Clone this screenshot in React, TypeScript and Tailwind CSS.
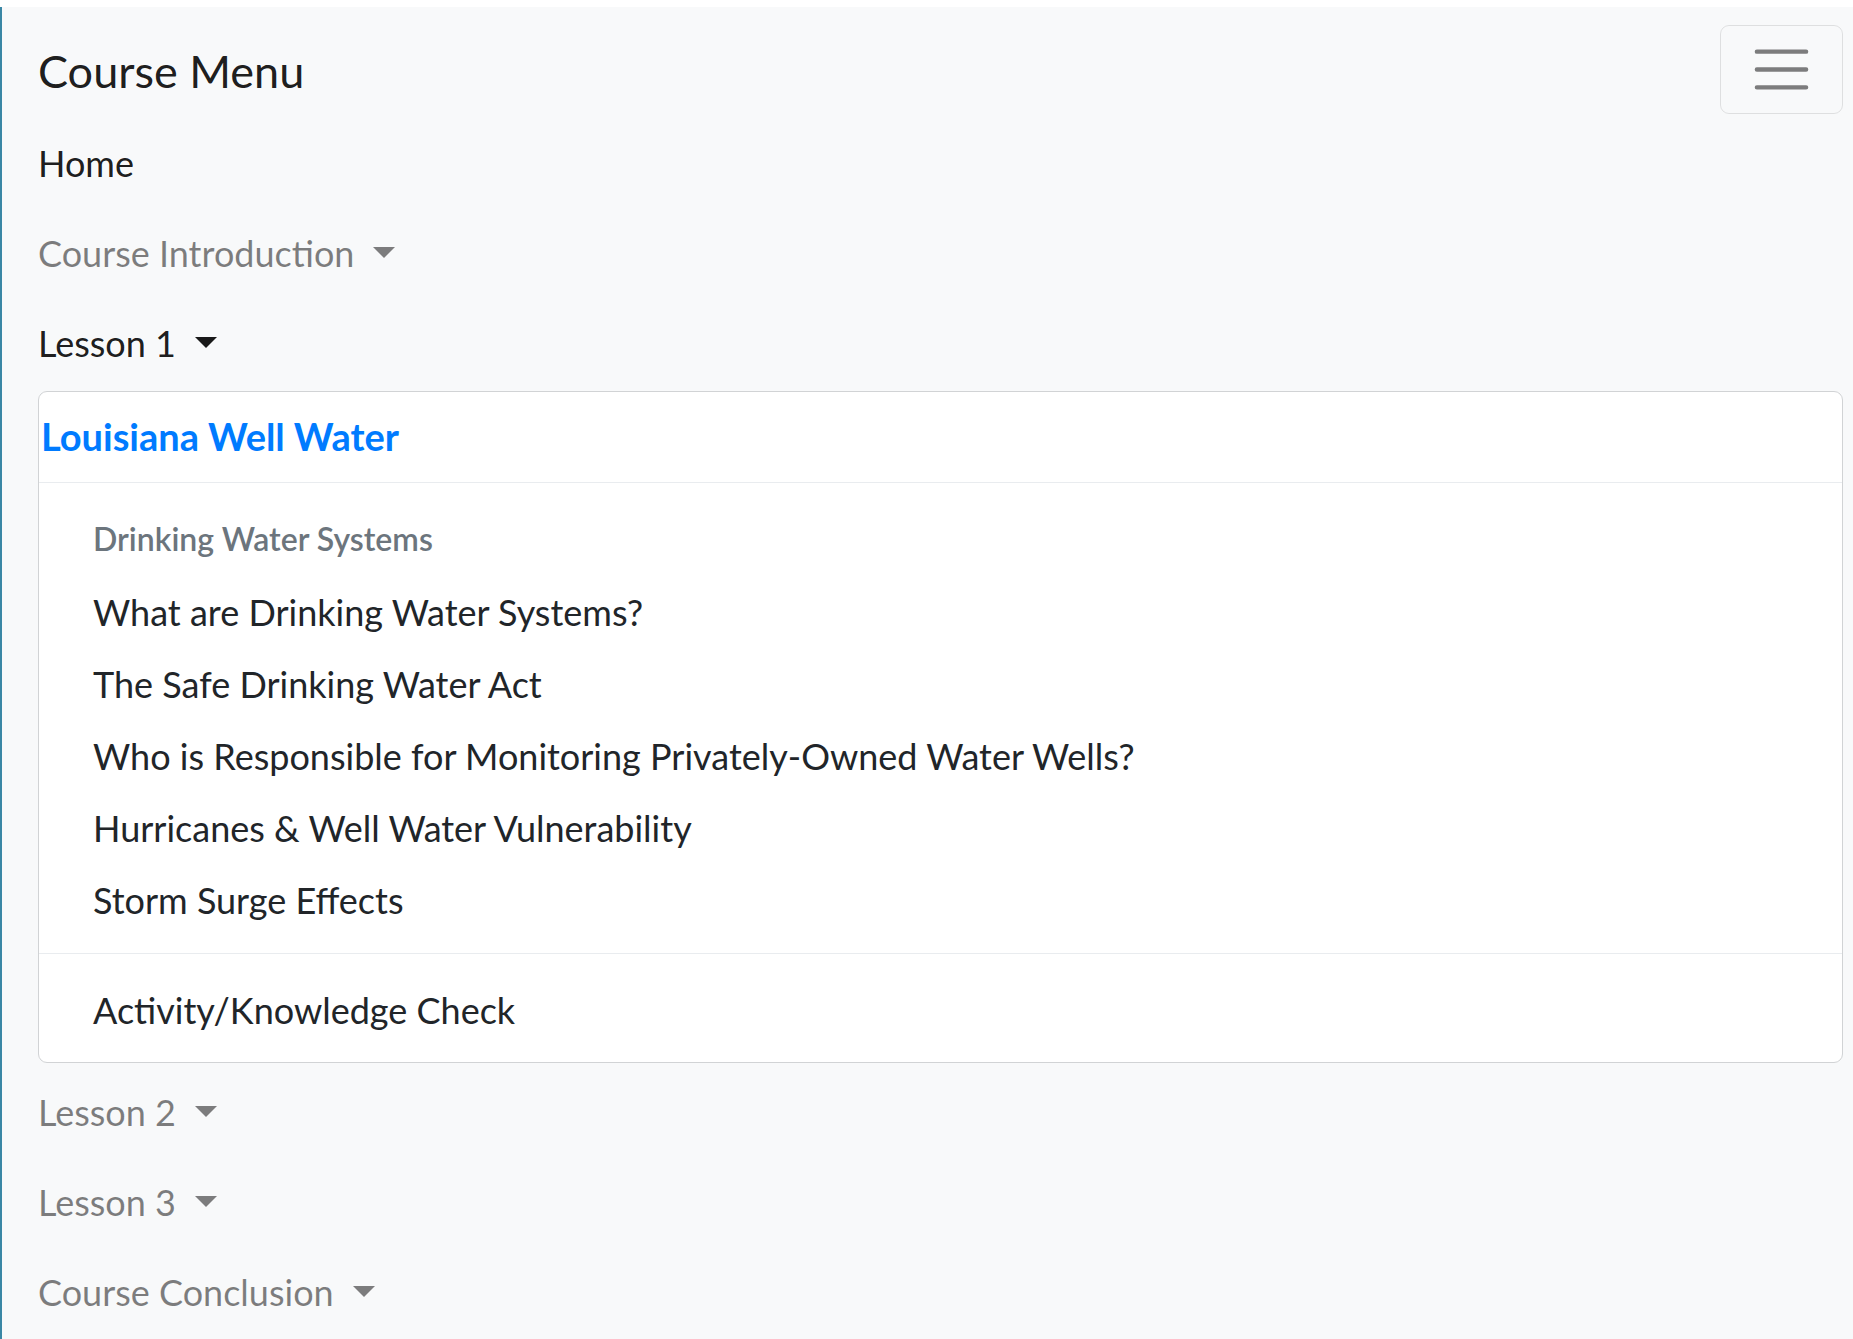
import { useState } from "react";

type NavItem = {
  label: string;
  active?: boolean;
  caret?: boolean;
};

const topLinks: NavItem[] = [
  { label: "Home", active: true },
  { label: "Course Introduction", caret: true },
  { label: "Lesson 1", active: true, caret: true },
];

const bottomLinks: NavItem[] = [
  { label: "Lesson 2", caret: true },
  { label: "Lesson 3", caret: true },
  { label: "Course Conclusion", caret: true },
];

const lessonPages = [
  "What are Drinking Water Systems?",
  "The Safe Drinking Water Act",
  "Who is Responsible for Monitoring Privately-Owned Water Wells?",
  "Hurricanes & Well Water Vulnerability",
  "Storm Surge Effects",
];

function Caret() {
  return (
    <span className="ml-[19px] inline-block h-0 w-0 border-t-[11px] border-r-[11px] border-b-0 border-l-[11px] border-solid border-r-transparent border-l-transparent border-t-current align-[9px]" />
  );
}

function NavLink({ item }: { item: NavItem }) {
  return (
    <a
      href="#"
      className={`block py-[18px] text-[36px] leading-[54px] ${
        item.active ? "text-black/90" : "text-black/50"
      }`}
    >
      {item.label}
      {item.caret && <Caret />}
    </a>
  );
}

export default function App() {
  const [open, setOpen] = useState(true);

  return (
    <div className="min-h-screen bg-white pt-[7px] font-['Lato','Liberation_Sans',sans-serif]">
      <nav className="min-h-[1332px] border-l-2 border-[#3a87a5] bg-[#f8f9fa] pt-[18px] pr-[10px] pl-[36px]">
        {/* Brand + toggler */}
        <div className="flex items-center justify-between pb-[4px]">
          <span className="pt-[11px] pb-[7px] text-[45px] leading-[1.5] text-black/90">Course Menu</span>
          <button
            onClick={() => setOpen(!open)}
            className="rounded-[9px] border border-black/10 px-[27px] py-[10px]"
            aria-label="Toggle navigation"
          >
            <svg width="67" height="67" viewBox="0 0 30 30">
              <path
                d="M4 7h22M4 15h22M4 23h22"
                stroke="rgba(0,0,0,0.5)"
                strokeWidth="2"
                strokeLinecap="round"
                fill="none"
              />
            </svg>
          </button>
        </div>

        {/* Links */}
        <div className="flex flex-col">
          {topLinks.map((item) => (
            <NavLink key={item.label} item={item} />
          ))}

          {open && (
            <div className="mt-[3px] mb-[4px] rounded-[9px] border border-[#d1d3d5] bg-white">
              <div className="flex h-[91px] items-center border-b border-[#e9ecef] pl-[2px]">
                <a href="#" className="text-[38px] font-bold leading-[1.2] text-[#007bff]">
                  Louisiana Well Water
                </a>
              </div>

              <div className="pt-[16px] pb-[17px]">
                <h6 className="px-[54px] pt-[16px] pb-[14px] text-[32px] font-semibold leading-[47px] text-[#6c757d]">
                  Drinking Water Systems
                </h6>
                {lessonPages.map((page) => (
                  <a
                    key={page}
                    href="#"
                    className="block px-[54px] py-[9px] text-[36px] leading-[54px] text-[#212529]"
                  >
                    {page}
                  </a>
                ))}
              </div>

              <div className="border-t border-[#e9ecef] pt-[20px] pb-[16px]">
                <a href="#" className="block px-[54px] py-[9px] text-[36px] leading-[54px] text-[#212529]">
                  Activity/Knowledge Check
                </a>
              </div>
            </div>
          )}

          {bottomLinks.map((item) => (
            <NavLink key={item.label} item={item} />
          ))}
        </div>
      </nav>
    </div>
  );
}
